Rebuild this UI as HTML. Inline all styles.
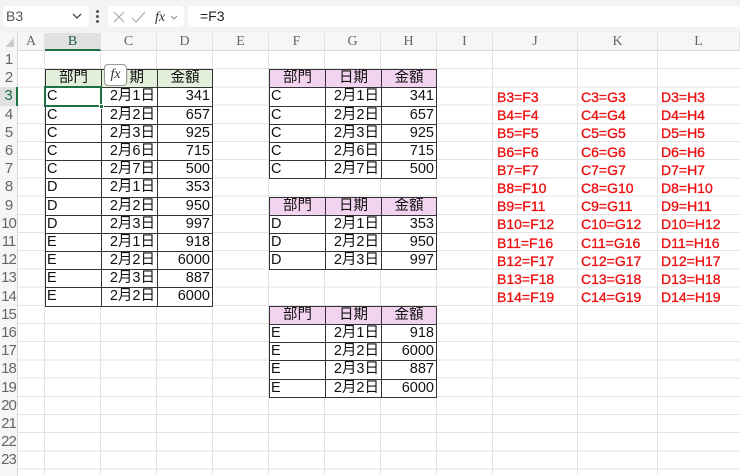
<!DOCTYPE html>
<html><head><meta charset="utf-8"><style>
*{margin:0;padding:0;box-sizing:border-box}
body{width:740px;height:475px;overflow:hidden;background:#fff;font-family:"Liberation Sans","Noto Sans CJK TC",sans-serif;position:relative}
.abs{position:absolute}
.top{left:0;top:0;width:740px;height:33px;background:#f3f3f3}
.box{background:#fff;border-radius:4px;position:absolute}
.hdr{left:0;top:33px;width:740px;height:18px;background:#f6f6f6;border-bottom:1px solid #d8d8d8}
.ch{position:absolute;top:33px;height:18px;font:14px "Liberation Serif",serif;color:#666;text-align:center;line-height:18px;border-right:1px solid #e0e0e0}
.rh{position:absolute;left:0;width:18px;background:#f6f6f6;border-right:1px solid #d8d8d8;font:15px "Liberation Sans Narrow","Liberation Sans",sans-serif;color:#666;text-align:center;letter-spacing:-1px}
.grid{left:18px;top:51px;width:722px;height:424px;
background-image:repeating-linear-gradient(to bottom,transparent 0,transparent 17.2px,#e3e3e3 17.2px,#e3e3e3 18.2px)}
.vl{position:absolute;top:51px;width:1px;height:424px;background:#e3e3e3}
.t{position:absolute;display:grid;grid-template-columns:55px 55px 54px;gap:1px;padding:1px;background:#333}
.t div{background:#fff;font-size:14.5px;line-height:17px;height:17.2px;white-space:nowrap;overflow:hidden;color:#111}
.t .h{text-align:center}
.t .g{background:#e2efda}
.t .p{background:#f2d3f0}
.t .r{text-align:right;padding-right:2px}
.t .l{padding-left:1px}
.red{position:absolute;color:#ee1111;font-size:14px;line-height:18.2px;-webkit-text-stroke:0.35px #ee1111}
</style></head><body>
<div class="abs top"></div>
<div class="box" style="left:3px;top:6px;width:86px;height:21px;font-size:14px;color:#555;line-height:21px;padding-left:3px">B3<svg style="position:absolute;right:7px;top:7px" width="10" height="7"><path d="M1 1l4 4 4-4" stroke="#444" stroke-width="1.3" fill="none"/></svg></div>
<div class="abs" style="left:96px;top:10px;width:3px;height:3px;background:#555;border-radius:50%"></div>
<div class="abs" style="left:96px;top:15px;width:3px;height:3px;background:#555;border-radius:50%"></div>
<div class="abs" style="left:96px;top:20px;width:3px;height:3px;background:#555;border-radius:50%"></div>
<div class="box" style="left:108px;top:6px;width:76px;height:21px"></div>
<svg class="abs" style="left:112px;top:9px" width="70" height="16"><path d="M2 3l10 10M12 3L2 13" stroke="#aaa" stroke-width="1.2" fill="none"/><path d="M20 9l4 4 9-10" stroke="#aaa" stroke-width="1.2" fill="none"/><text x="43" y="12" font-family="Liberation Serif" font-style="italic" font-size="14" fill="#333">fx</text><path d="M59 7l3 3 3-3" stroke="#888" fill="none"/></svg>
<div class="box" style="left:188px;top:6px;width:552px;height:21px;font-size:14px;line-height:21px;padding-left:12px;color:#222">=F3</div>
<div class="abs hdr"></div>
<div class="abs" style="left:0;top:33px;width:18px;height:18px;background:#f6f6f6;border-right:1px solid #d8d8d8"><svg width="18" height="18"><path d="M14 5v9H5z" fill="#ccc"/></svg></div>
<div class="ch" style="left:18px;width:27px">A</div>
<div class="ch" style="left:45px;width:56px;background:#e0e0e0;border-bottom:2px solid #1e7145;color:#1e5e3a">B</div>
<div class="ch" style="left:101px;width:56px">C</div>
<div class="ch" style="left:157px;width:56px">D</div>
<div class="ch" style="left:213px;width:56px">E</div>
<div class="ch" style="left:269px;width:56px">F</div>
<div class="ch" style="left:325px;width:56px">G</div>
<div class="ch" style="left:381px;width:56px">H</div>
<div class="ch" style="left:437px;width:56px">I</div>
<div class="ch" style="left:493px;width:85px">J</div>
<div class="ch" style="left:578px;width:80px">K</div>
<div class="ch" style="left:658px;width:82px">L</div>
<div class="abs grid"></div>
<div class="vl" style="left:44px"></div><div class="vl" style="left:100px"></div><div class="vl" style="left:156px"></div><div class="vl" style="left:212px"></div><div class="vl" style="left:268px"></div><div class="vl" style="left:324px"></div><div class="vl" style="left:380px"></div><div class="vl" style="left:436px"></div><div class="vl" style="left:492px"></div><div class="vl" style="left:577px"></div><div class="vl" style="left:657px"></div>
<div class="rh" style="top:51px;height:18.2px;line-height:18px">1</div>
<div class="rh" style="top:69.2px;height:18.2px;line-height:18px">2</div>
<div class="rh" style="top:87.4px;height:18.2px;line-height:18px;background:#e0e0e0;color:#1e7145;border-right:2px solid #1e7145">3</div>
<div class="rh" style="top:105.6px;height:18.2px;line-height:18px">4</div>
<div class="rh" style="top:123.8px;height:18.2px;line-height:18px">5</div>
<div class="rh" style="top:142px;height:18.2px;line-height:18px">6</div>
<div class="rh" style="top:160.2px;height:18.2px;line-height:18px">7</div>
<div class="rh" style="top:178.4px;height:18.2px;line-height:18px">8</div>
<div class="rh" style="top:196.6px;height:18.2px;line-height:18px">9</div>
<div class="rh" style="top:214.8px;height:18.2px;line-height:18px">10</div>
<div class="rh" style="top:233px;height:18.2px;line-height:18px">11</div>
<div class="rh" style="top:251.2px;height:18.2px;line-height:18px">12</div>
<div class="rh" style="top:269.4px;height:18.2px;line-height:18px">13</div>
<div class="rh" style="top:287.6px;height:18.2px;line-height:18px">14</div>
<div class="rh" style="top:305.8px;height:18.2px;line-height:18px">15</div>
<div class="rh" style="top:324px;height:18.2px;line-height:18px">16</div>
<div class="rh" style="top:342.2px;height:18.2px;line-height:18px">17</div>
<div class="rh" style="top:360.4px;height:18.2px;line-height:18px">18</div>
<div class="rh" style="top:378.6px;height:18.2px;line-height:18px">19</div>
<div class="rh" style="top:396.8px;height:18.2px;line-height:18px">20</div>
<div class="rh" style="top:415px;height:18.2px;line-height:18px">21</div>
<div class="rh" style="top:433.2px;height:18.2px;line-height:18px">22</div>
<div class="rh" style="top:451.4px;height:18.2px;line-height:18px">23</div>
<div class="rh" style="top:469.6px;height:6px"></div>

<div class="t" style="left:45px;top:69.2px">
<div class="h g">部門</div><div class="h g">日期</div><div class="h g">金額</div>
<div class="l">C</div><div class="r">2月1日</div><div class="r">341</div>
<div class="l">C</div><div class="r">2月2日</div><div class="r">657</div>
<div class="l">C</div><div class="r">2月3日</div><div class="r">925</div>
<div class="l">C</div><div class="r">2月6日</div><div class="r">715</div>
<div class="l">C</div><div class="r">2月7日</div><div class="r">500</div>
<div class="l">D</div><div class="r">2月1日</div><div class="r">353</div>
<div class="l">D</div><div class="r">2月2日</div><div class="r">950</div>
<div class="l">D</div><div class="r">2月3日</div><div class="r">997</div>
<div class="l">E</div><div class="r">2月1日</div><div class="r">918</div>
<div class="l">E</div><div class="r">2月2日</div><div class="r">6000</div>
<div class="l">E</div><div class="r">2月3日</div><div class="r">887</div>
<div class="l">E</div><div class="r">2月2日</div><div class="r">6000</div>
</div>
<div class="abs" style="left:44px;top:86.4px;width:58px;height:20.2px;border:2px solid #1e7145"></div>
<div class="abs" style="left:99px;top:104px;width:5px;height:5px;background:#1e7145;border:1px solid #fff"></div>
<div class="abs" style="left:104px;top:64px;width:23px;height:22px;background:#fff;border:1px solid #999;border-radius:4px;font:italic 14px 'Liberation Serif',serif;line-height:20px;text-align:center;color:#333">fx</div>

<div class="t" style="left:269px;top:69.2px">
<div class="h p">部門</div><div class="h p">日期</div><div class="h p">金額</div>
<div class="l">C</div><div class="r">2月1日</div><div class="r">341</div>
<div class="l">C</div><div class="r">2月2日</div><div class="r">657</div>
<div class="l">C</div><div class="r">2月3日</div><div class="r">925</div>
<div class="l">C</div><div class="r">2月6日</div><div class="r">715</div>
<div class="l">C</div><div class="r">2月7日</div><div class="r">500</div>
</div>
<div class="t" style="left:269px;top:196.6px">
<div class="h p">部門</div><div class="h p">日期</div><div class="h p">金額</div>
<div class="l">D</div><div class="r">2月1日</div><div class="r">353</div>
<div class="l">D</div><div class="r">2月2日</div><div class="r">950</div>
<div class="l">D</div><div class="r">2月3日</div><div class="r">997</div>
</div>
<div class="t" style="left:269px;top:305.8px">
<div class="h p">部門</div><div class="h p">日期</div><div class="h p">金額</div>
<div class="l">E</div><div class="r">2月1日</div><div class="r">918</div>
<div class="l">E</div><div class="r">2月2日</div><div class="r">6000</div>
<div class="l">E</div><div class="r">2月3日</div><div class="r">887</div>
<div class="l">E</div><div class="r">2月2日</div><div class="r">6000</div>
</div>

<div class="red" style="left:497px;top:88px">B3=F3<br>B4=F4<br>B5=F5<br>B6=F6<br>B7=F7<br>B8=F10<br>B9=F11<br>B10=F12<br>B11=F16<br>B12=F17<br>B13=F18<br>B14=F19</div>
<div class="red" style="left:581px;top:88px">C3=G3<br>C4=G4<br>C5=G5<br>C6=G6<br>C7=G7<br>C8=G10<br>C9=G11<br>C10=G12<br>C11=G16<br>C12=G17<br>C13=G18<br>C14=G19</div>
<div class="red" style="left:661px;top:88px">D3=H3<br>D4=H4<br>D5=H5<br>D6=H6<br>D7=H7<br>D8=H10<br>D9=H11<br>D10=H12<br>D11=H16<br>D12=H17<br>D13=H18<br>D14=H19</div>
</body></html>
